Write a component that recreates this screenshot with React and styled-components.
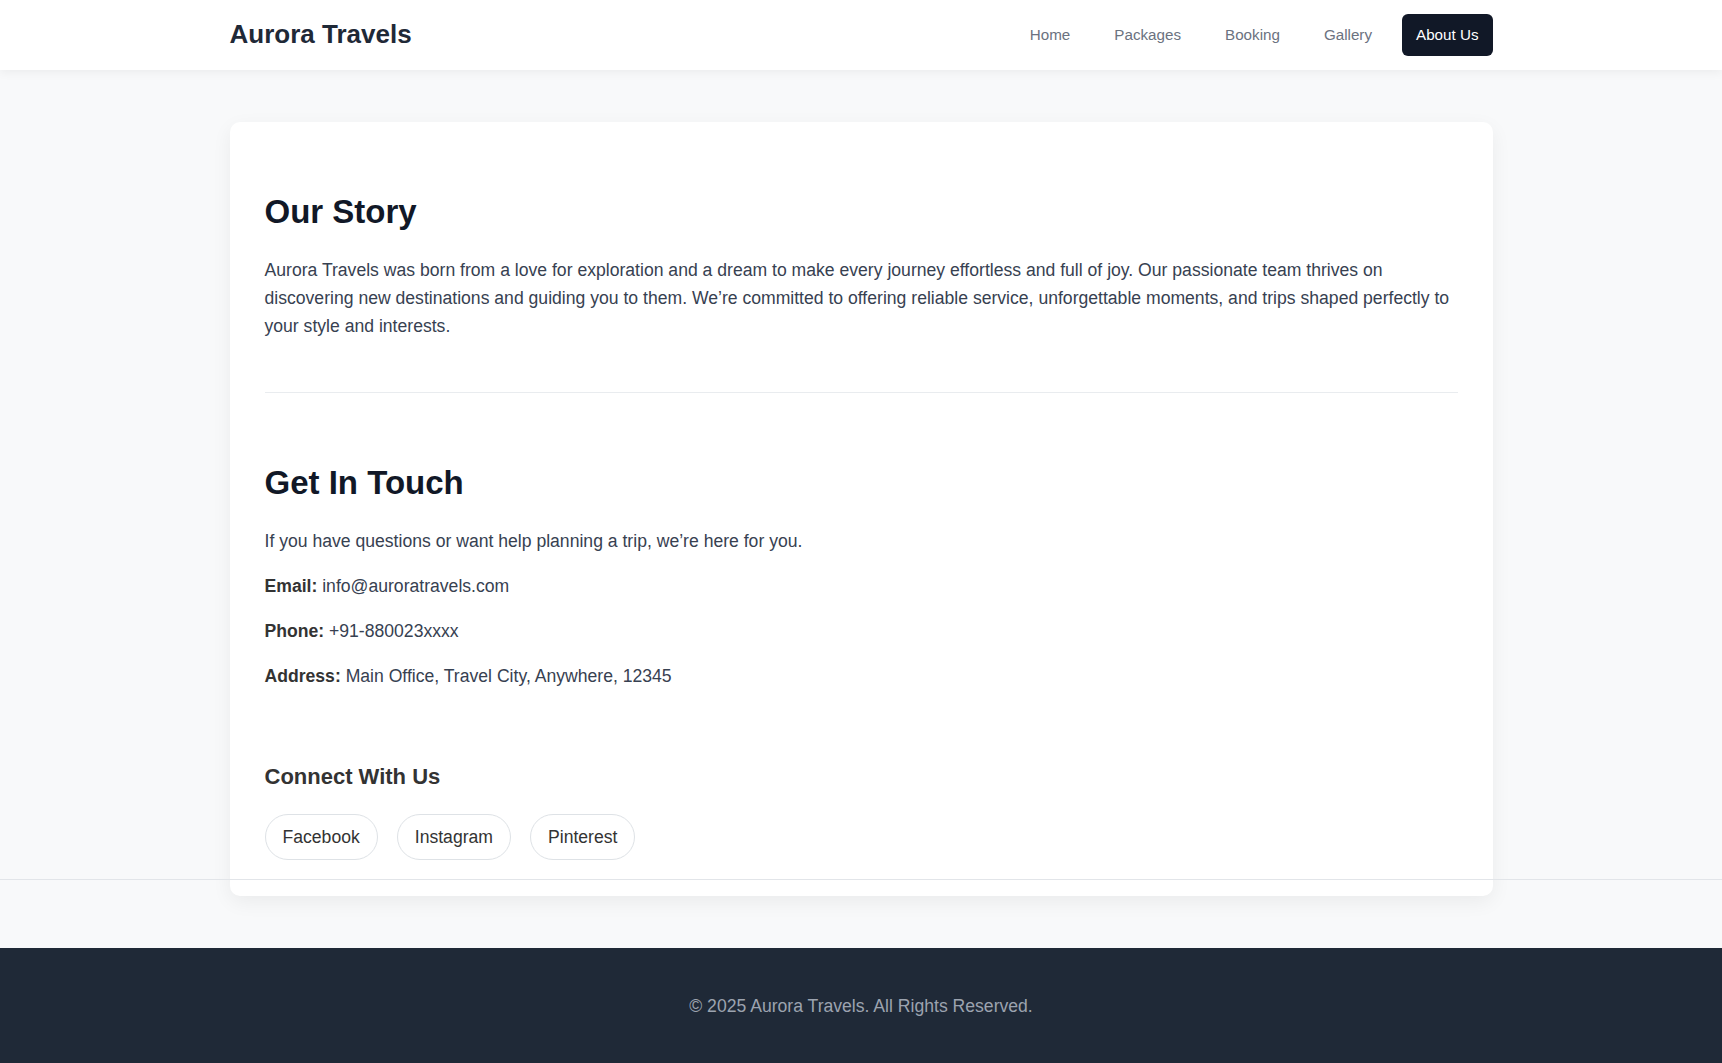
import React from "react";
import styled, { createGlobalStyle } from "styled-components";

const GlobalStyle = createGlobalStyle`
  * {
    box-sizing: border-box;
  }
  html, body {
    margin: 0;
    padding: 0;
  }
  body {
    font-family: "Liberation Sans", Arial, sans-serif;
    background: #f8f9fa;
    color: #333;
    overflow-x: hidden;
  }
`;

const Header = styled.header`
  background: #fff;
  height: 70px;
  box-shadow: 0 2px 10px rgba(0, 0, 0, 0.06);
  position: relative;
  z-index: 2;
`;

const Container = styled.div`
  width: 1263px;
  margin: 0 auto;
`;

const HeaderInner = styled(Container)`
  height: 100%;
  display: flex;
  align-items: center;
  justify-content: space-between;
`;

const Logo = styled.div`
  font-size: 26px;
  font-weight: 700;
  color: #1f2937;
  margin-top: -1px;
`;

const Nav = styled.nav`
  display: flex;
  align-items: center;
  gap: 16px;
  margin-top: -1px;
`;

const NavLink = styled.a`
  font-size: 15.2px;
  line-height: 18px;
  padding: 12px 14px;
  border-radius: 6px;
  text-decoration: none;
  cursor: pointer;
  color: ${(p) => (p.$active ? "#fff" : "#6b7280")};
  background: ${(p) => (p.$active ? "#111827" : "transparent")};
`;

const Main = styled.main`
  padding: 52px 0;
`;

const Card = styled(Container)`
  background: #fff;
  border-radius: 10px;
  box-shadow: 0 6px 20px rgba(0, 0, 0, 0.06);
  padding: 35px 35px 16px;
`;

const Section = styled.section`
  padding: ${(p) => (p.$last ? "35px 0 0" : "35px 0")};
  margin-bottom: ${(p) => (p.$last ? "0" : "35px")};
  border-bottom: ${(p) => (p.$last ? "none" : "1px solid #e9ecef")};
`;

const Title = styled.h2`
  margin: 0 0 24px;
  font-size: 33px;
  line-height: 1.2;
  font-weight: 700;
  color: #111827;
`;

const Text = styled.p`
  margin: 0 0 17px;
  font-size: 17.6px;
  line-height: 1.6;
  color: #374151;

  strong {
    color: #333;
  }
`;

const Social = styled.div`
  margin-top: 74px;
`;

const SubTitle = styled.h3`
  margin: 0 0 23px;
  font-size: 22px;
  line-height: 1.2;
  font-weight: 700;
  color: #333;
`;

const Pills = styled.div`
  display: flex;
  gap: 19px;
`;

const Pill = styled.a`
  display: inline-block;
  padding: 8px 17px;
  font-size: 17.6px;
  line-height: 28px;
  color: #333;
  background: #fff;
  border: 1px solid #dee2e6;
  border-radius: 999px;
  text-decoration: none;
  cursor: pointer;
`;

const FullRule = styled.div`
  height: 1px;
  background: #e2e5e9;
  margin: 19px calc(50% - 50vw) 0;
`;

const Footer = styled.footer`
  background: #1f2937;
  padding: 44px 0;
  text-align: center;
  color: #9ca3af;
  font-size: 17.6px;
  line-height: 28px;
`;

const links = ["Home", "Packages", "Booking", "Gallery", "About Us"];
const socials = ["Facebook", "Instagram", "Pinterest"];

export default function App() {
  return (
    <>
      <GlobalStyle />
      <Header>
        <HeaderInner>
          <Logo>Aurora Travels</Logo>
          <Nav>
            {links.map((l) => (
              <NavLink key={l} $active={l === "About Us"}>
                {l}
              </NavLink>
            ))}
          </Nav>
        </HeaderInner>
      </Header>

      <Main>
        <Card>
          <Section>
            <Title>Our Story</Title>
            <Text>
              Aurora Travels was born from a love for exploration and a dream to
              make every journey effortless and full of joy. Our passionate team
              thrives on discovering new destinations and guiding you to them.
              We’re committed to offering reliable service, unforgettable
              moments, and trips shaped perfectly to your style and interests.
            </Text>
          </Section>

          <Section $last>
            <Title>Get In Touch</Title>
            <Text>
              If you have questions or want help planning a trip, we’re here for
              you.
            </Text>
            <Text>
              <strong>Email:</strong> info@auroratravels.com
            </Text>
            <Text>
              <strong>Phone:</strong> +91-880023xxxx
            </Text>
            <Text>
              <strong>Address:</strong> Main Office, Travel City, Anywhere, 12345
            </Text>

            <Social>
              <SubTitle>Connect With Us</SubTitle>
              <Pills>
                {socials.map((s) => (
                  <Pill key={s}>{s}</Pill>
                ))}
              </Pills>
            </Social>
          </Section>
          <FullRule />
        </Card>
      </Main>

      <Footer>© 2025 Aurora Travels. All Rights Reserved.</Footer>
    </>
  );
}
